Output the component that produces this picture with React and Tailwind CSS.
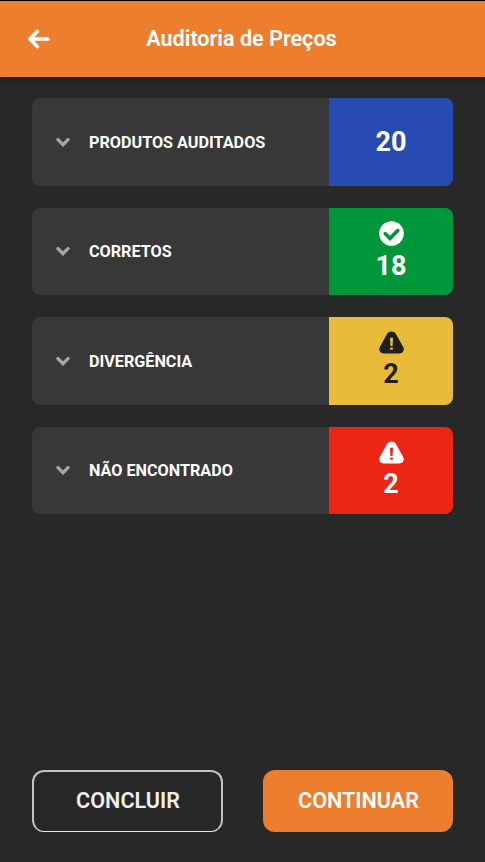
const ArrowLeft = () => (
  <svg viewBox="0 0 22 20" className="h-5 w-[22px]" fill="none" stroke="currentColor" strokeWidth="3.7" strokeLinecap="round" strokeLinejoin="round">
    <path d="M9.2 2.4 2 10l7.2 7.6M2.4 10H20" />
  </svg>
);

const ChevronDown = () => (
  <svg viewBox="0 0 14 10" className="h-2.5 w-3.5 shrink-0 text-[#a6a6a6]" fill="none" stroke="currentColor" strokeWidth="3.4" strokeLinecap="round">
    <path d="m2 2.6 5 5 5-5" />
  </svg>
);

const CheckCircle = () => (
  <svg viewBox="0 0 25 25" className="size-[25px]">
    <circle cx="12.5" cy="12.5" r="12.3" fill="currentColor" />
    <path d="m6.3 12.8 4.7 4.6 7.8-7.9" fill="none" stroke="#00973a" strokeWidth="3.7" strokeLinecap="round" />
  </svg>
);

// The mark is cut out so the tile colour shows through
const Warning = () => (
  <svg viewBox="0 0 25 23" className="h-[23px] w-[25px]" fill="currentColor" fillRule="evenodd">
    <path d="M8.2 2.7C10.2-.4 14.8-.4 16.8 2.7L24.2 15.9C25.8 19.2 24 22.4 20.7 22.4H4.3C1 22.4-.8 19.2.8 15.9ZM11 6.7 11.4 15H13.6L14 6.7ZM11.2 16.6V18.8H13.8V16.6Z" />
  </svg>
);

const summary = [
  { label: "PRODUTOS AUDITADOS", value: 20, color: "bg-[#284bb3] text-white" },
  { label: "CORRETOS", value: 18, color: "bg-[#00973a] text-white", icon: CheckCircle },
  { label: "DIVERGÊNCIA", value: 2, color: "bg-[#e9bb3a] text-[#1f1f1f]", icon: Warning },
  { label: "NÃO ENCONTRADO", value: 2, color: "bg-[#eb2615] text-white", icon: Warning },
];

const SummaryCard = ({ item }) => (
  <button className="flex h-[87.4px] w-full overflow-hidden rounded-lg bg-[#383838] text-left">
    <div className="flex h-full flex-1 items-center gap-[19px] pl-6">
      <ChevronDown />
      <span className="pt-0.5 text-[16.2px] font-bold text-white">{item.label}</span>
    </div>
    <div className={`flex h-full w-[124px] flex-col items-center justify-center gap-1 ${item.color}`}>
      {item.icon && <item.icon />}
      <span className="text-[27px] leading-8 font-bold">{item.value}</span>
    </div>
  </button>
);

const App = () => {
  return (
    <div className="flex h-screen flex-col bg-[#282828] font-['Roboto',sans-serif]">
      {/* HEADER */}
      <header className="grid h-[77px] grid-cols-[77px_1fr_79px] items-center border-t border-black bg-[#ed7e2e] text-white shadow-[0_2px_5px_rgba(0,0,0,0.4)]">
        <button className="flex justify-center" aria-label="Voltar">
          <ArrowLeft />
        </button>
        <h1 className="text-center text-[21.6px] font-semibold">Auditoria de Preços</h1>
      </header>

      {/* SUMMARY */}
      <main className="flex flex-1 flex-col gap-[22px] px-8 pt-[21.4px]">
        {summary.map((item) => (
          <SummaryCard key={item.label} item={item} />
        ))}
      </main>

      {/* ACTIONS */}
      <footer className="flex justify-between px-8 pb-[30px] text-[21.6px] font-semibold text-white">
        <button className="h-[62px] w-[191px] rounded-xl border-2 border-b border-[#c4c2c2] border-b-[#e8e8e8] pl-px text-[#eeeeee]">CONCLUIR</button>
        <button className="h-[62px] w-[190px] rounded-xl bg-[#ed7e2e] pl-px">CONTINUAR</button>
      </footer>
    </div>
  );
};

export default App;
